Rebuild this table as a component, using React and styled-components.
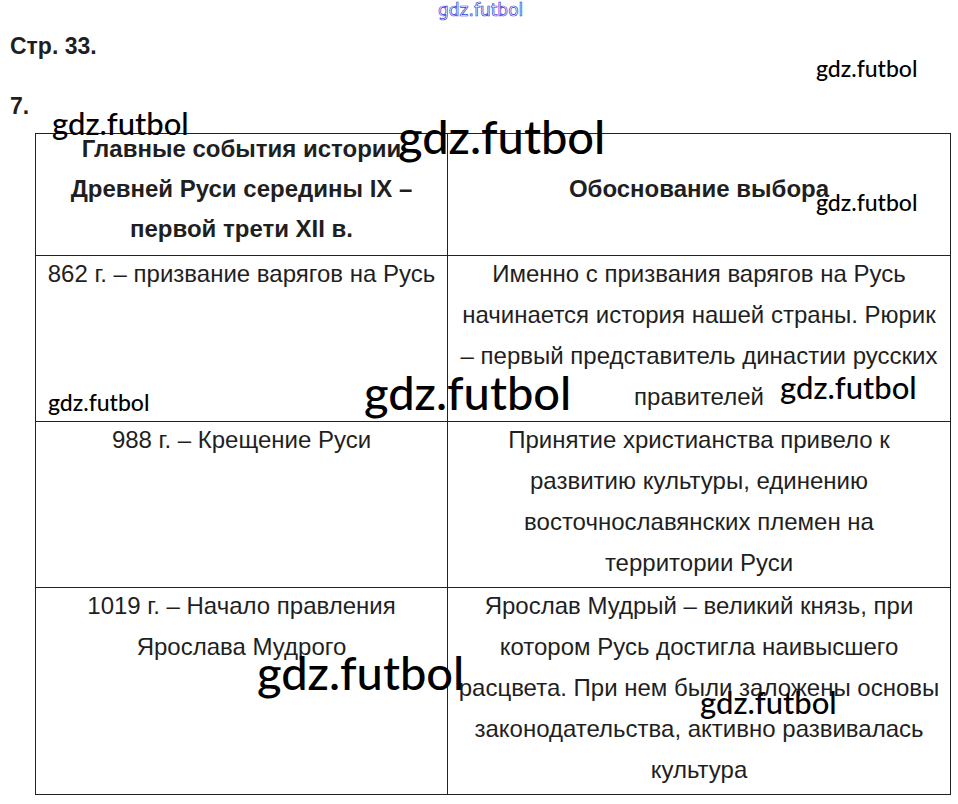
import React from 'react'
import styled, { createGlobalStyle } from 'styled-components'

const rows = [
  {
    event: ['862 г. – призвание варягов на Русь'],
    reason: [
      'Именно с призвания варягов на Русь',
      'начинается история нашей страны. Рюрик',
      '– первый представитель династии русских',
      'правителей'
    ]
  },
  {
    event: ['988 г. – Крещение Руси'],
    reason: [
      'Принятие христианства привело к',
      'развитию культуры, единению',
      'восточнославянских племен на',
      'территории Руси'
    ]
  },
  {
    event: ['1019 г. – Начало правления', 'Ярослава Мудрого'],
    reason: [
      'Ярослав Мудрый – великий князь, при',
      'котором Русь достигла наивысшего',
      'расцвета. При нем были заложены основы',
      'законодательства, активно развивалась',
      'культура'
    ]
  }
]

const marks = [
  { x: 816, y: 57, size: 23 },
  { x: 52, y: 108, size: 31 },
  { x: 398, y: 113, size: 47 },
  { x: 816, y: 191, size: 23 },
  { x: 364, y: 369, size: 47 },
  { x: 48, y: 391, size: 23 },
  { x: 780, y: 372, size: 31 },
  { x: 257, y: 649, size: 47 },
  { x: 700, y: 687, size: 31 }
]

const lines = (list) => list.map((l, i) => (
  <React.Fragment key={i}>
    {i > 0 && <br/>}
    {l}
  </React.Fragment>
))

export default function App() {
  return (
    <Page>
      <GlobalStyle/>
      <TopMark>gdz.futbol</TopMark>
      <Heading>Стр. 33.</Heading>
      <Task>7.</Task>
      <Table>
        <thead>
          <tr>
            <HeadCell width={411}>
              <HeadText>
                Главные события истории<br/>
                Древней Руси середины IX –<br/>
                первой трети XII в.
              </HeadText>
            </HeadCell>
            <HeadCell><HeadText>Обоснование выбора</HeadText></HeadCell>
          </tr>
        </thead>
        <tbody>
          {rows.map((row, i) => (
            <tr key={i}>
              <Cell><CellText>{lines(row.event)}</CellText></Cell>
              <Cell><CellText>{lines(row.reason)}</CellText></Cell>
            </tr>
          ))}
        </tbody>
      </Table>
      {marks.map((m, i) => (
        <Mark key={i} style={{ left: m.x, top: m.y, fontSize: m.size }}>gdz.futbol</Mark>
      ))}
    </Page>
  )
}

const GlobalStyle = createGlobalStyle`
  body {
    margin: 0;
    background: #ffffff;
  }
`
const Page = styled.div`
  position: relative;
  width: 958px;
  height: 804px;
  overflow: hidden;
  padding-top: 34px;
  box-sizing: border-box;
  font-family: "Liberation Sans", Arial, sans-serif;
  color: #1f1f1f;
`
const Heading = styled.div`
  font-size: 23px;
  font-weight: bold;
  line-height: 24px;
  padding-left: 10px;
`
const Task = styled(Heading)`
  margin-top: 36px;
`
const Table = styled.table`
  margin: 15px 0 0 35px;
  width: 916px;
  border-collapse: collapse;
  font-size: 24px;
  line-height: 41px;
`
const HeadCell = styled.th`
  width: ${props => props.width ? props.width + 'px' : 'auto'};
  height: 121px;
  border: 1px solid #222;
  padding: 0;
  line-height: 40px;
  font-weight: bold;
  text-align: center;
  vertical-align: middle;
`
const HeadText = styled.div`
  margin-top: -12px;
`
const Cell = styled.td`
  border: 1px solid #222;
  padding: 0;
  text-align: center;
  vertical-align: top;
`
const CellText = styled.div`
  margin: -3px 0 4px;
`
const Mark = styled.div`
  position: absolute;
  font-family: Lato, sans-serif;
  font-weight: 500;
  color: #000;
  line-height: 1;
  white-space: nowrap;
`
const TopMark = styled.div`
  position: absolute;
  left: 438px;
  top: 2px;
  font-family: "DejaVu Sans", Verdana, sans-serif;
  font-size: 17px;
  line-height: 1;
  color: transparent;
  -webkit-text-stroke: 0.7px #3a3ad8;
`
